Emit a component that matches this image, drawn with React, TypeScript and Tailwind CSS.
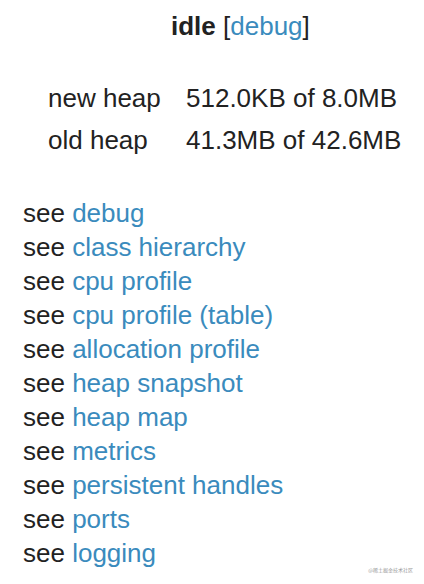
import React from "react";

const links = [
  "debug",
  "class hierarchy",
  "cpu profile",
  "cpu profile (table)",
  "allocation profile",
  "heap snapshot",
  "heap map",
  "metrics",
  "persistent handles",
  "ports",
  "logging",
];

const heap = [
  { label: "new heap", value: "512.0KB of 8.0MB" },
  { label: "old heap", value: "41.3MB of 42.6MB" },
];

export default function App() {
  return (
    <div
      className="relative w-[424px] h-[584px] bg-white text-[#222] text-[26px]"
      style={{ fontFamily: '"Liberation Sans", Arial, sans-serif' }}
    >
      <div className="pt-[9px] pl-[171px] leading-[34px]">
        <span className="font-bold">idle</span> [
        <a className="text-[#3a8bbd]">debug</a>]
      </div>

      <table className="mt-[34px] ml-[48px] border-collapse">
        <tbody>
          {heap.map((row) => (
            <tr key={row.label} className="h-[42px]">
              <td className="w-[138px] p-0 leading-[42px]">{row.label}</td>
              <td className="p-0 leading-[42px]">{row.value}</td>
            </tr>
          ))}
        </tbody>
      </table>

      <div className="mt-[35px] pl-[23px]">
        {links.map((l) => (
          <div key={l} className="leading-[34px]">
            see <a className="text-[#3a8bbd]">{l}</a>
          </div>
        ))}
      </div>

      <div
        className="absolute right-[11px] bottom-[11px] text-[5px] text-[#999]"
        style={{ fontFamily: '"Noto Sans CJK SC", sans-serif' }}
      >
        @稀土掘金技术社区
      </div>
    </div>
  );
}
